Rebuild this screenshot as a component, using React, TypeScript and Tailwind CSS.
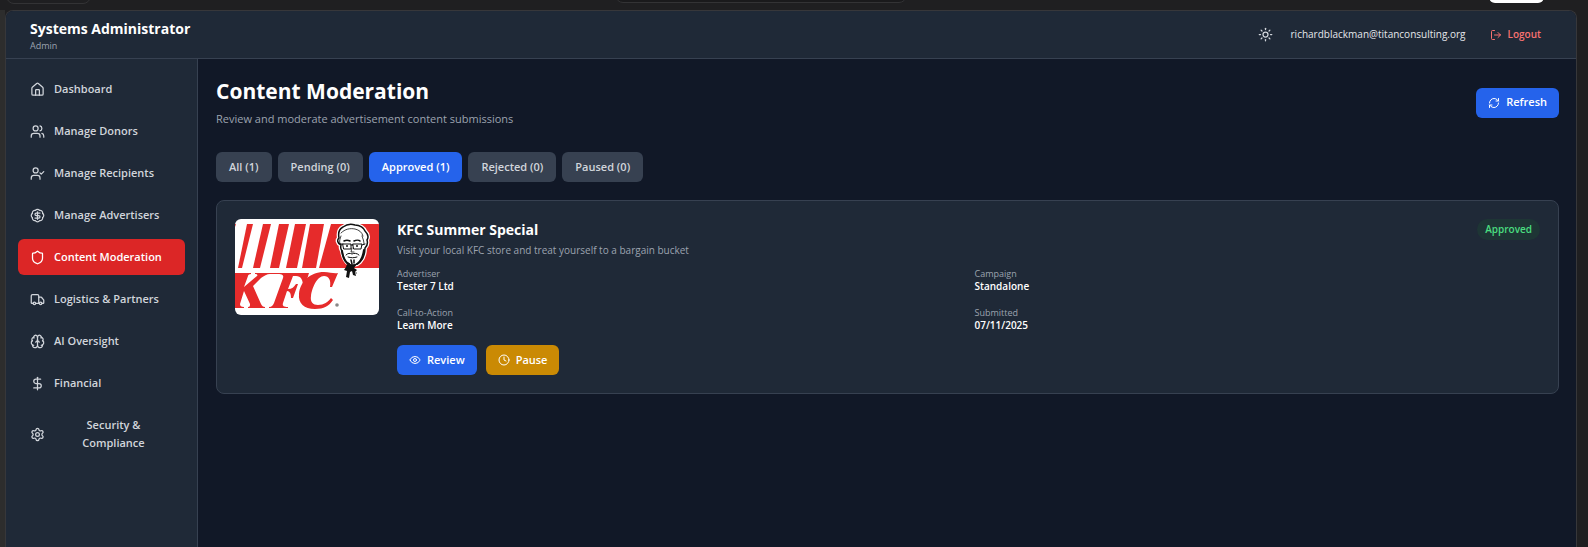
import { useState } from "react";
import {
  BadgeDollarSign,
  Brain,
  Clock,
  DollarSign,
  Eye,
  House,
  LogOut,
  RefreshCw,
  Settings,
  Shield,
  Sun,
  Truck,
  UserCheck,
  Users,
  type LucideIcon,
} from "lucide-react";

const NAV: { label: string; icon: LucideIcon }[] = [
  { label: "Dashboard", icon: House },
  { label: "Manage Donors", icon: Users },
  { label: "Manage Recipients", icon: UserCheck },
  { label: "Manage Advertisers", icon: BadgeDollarSign },
  { label: "Content Moderation", icon: Shield },
  { label: "Logistics & Partners", icon: Truck },
  { label: "AI Oversight", icon: Brain },
  { label: "Financial", icon: DollarSign },
  { label: "Security & Compliance", icon: Settings },
];

const FILTERS = [
  { label: "All", count: 1 },
  { label: "Pending", count: 0 },
  { label: "Approved", count: 1 },
  { label: "Rejected", count: 0 },
  { label: "Paused", count: 0 },
];

const DETAILS = [
  { label: "Advertiser", value: "Tester 7 Ltd" },
  { label: "Campaign", value: "Standalone" },
  { label: "Call-to-Action", value: "Learn More" },
  { label: "Submitted", value: "07/11/2025" },
];

const HEAD =
  "M108 8c4-3 9-3 12-2 5 0 9 3 10 6 3 3 4 6 2 9 1 3 0 6-2 8 0 6-2 11-5 14-3 3-8 4-11 2-4-2-6-7-7-13-1-2-2-3-1-6-4-2-4-5-2-7-1-5 0-9 4-11z";

function AdArtwork() {
  return (
    <svg viewBox="0 0 144 96" className="h-24 w-36 shrink-0 rounded-md bg-white" role="img" aria-label="KFC Summer Special">
      <g fill="#e62b2b">
        <path d="M0 5h1L0 8z" />
        <path d="M12 5h6L7 49H3z" />
        <path d="M28 5h8L25 49h-7z" />
        <path d="M44 5h10L44 49h-9z" />
        <path d="M60 5h11L62 49H51z" />
        <path d="M75 5h14L81 49H67z" />
        <path d="M96 5h48v44H84z" />
        {/* wordmark */}
        <path d="M0 54h16v1c-2 0-3 1-3 2L9 68l13-11c1-1 0-2-2-2v-1h15v1c-3 0-6 2-9 4l-8 8 8 18c1 2 2 3 4 3v1H13v-1c2 0 2-1 2-3L9 72 5 85c0 2 1 3 4 3v1H0z" />
        <path d="M35 54h39l-4 13h-2c0-6-2-10-7-10h-3l-5 13c4 0 6-2 8-5h2l-5 14h-2c0-4-1-7-4-7l-4 12c-1 3 1 4 5 4v1H34v-1c3 0 4-2 5-4l9-25c1-3-1-4-5-4h-8z" />
        <path d="M103 54l-6 14h-2c1-7-1-11-6-11-7 0-12 12-13 20-1 6 2 9 7 9 6 0 10-3 13-7l2 2c-4 6-9 9-18 9-11 0-17-6-16-15 1-12 11-22 25-22 6 0 10 2 14 1z" />
      </g>
      {/* white halo, then the head itself */}
      <path d={HEAD} fill="#fff" stroke="#fff" strokeWidth="4" />
      <path d={HEAD} fill="#fff" stroke="#111" strokeWidth="1.5" />
      <g fill="none" stroke="#111" strokeLinecap="round" strokeLinejoin="round">
        <path d="M106 14c4-4 9-5 14-4 4 1 7 3 8 7M106 17c-1 3-2 5-1 8M127 17c1 3 2 5 2 8" strokeWidth=".8" />
        <path d="M109 22c2-1 4-1 6 0M119 22c2-1 5-1 6 0" strokeWidth="1.6" />
        <path d="M108 25h8v5h-7zM118 25h9l-1 5h-7zM105 25h3M116 26h2M127 26l3-1" />
        <path d="M117 29l-1 4h3" strokeWidth=".8" />
        <path d="M111 36c2-2 4-2 6-1 2-1 5-1 7 1M113 38c3 1 6 1 9 0" />
        <path d="M107 32c1 7 4 12 7 13M129 31c-1 7-4 12-7 14" strokeWidth="2" />
        <path d="M116 41l1 4M119 41v3" strokeWidth="1.5" />
      </g>
      <circle cx="112" cy="27" r="1" fill="#111" />
      <circle cx="122" cy="27" r="1" fill="#111" />
      <path d="M112 45l5 1 5-1-3 4 3 2-2 2 1 4-3-1-1-4-2 1-1 6-3-1 1-6-3-1 2-3z" fill="#111" />
      <circle cx="102" cy="86" r="1.8" fill="#888" />
      <circle cx="121" cy="54" r="1" fill="#888" />
    </svg>
  );
}

function Header() {
  return (
    <header className="flex h-12 items-center justify-between border-b border-[#374151] bg-[#1f2937] pr-[23px] pl-6">
      <div className="pt-0.5">
        <p className="text-[14px] leading-5 font-bold text-white">Systems Administrator</p>
        <p className="text-[9px] leading-[14px] text-[#9ca3af]">Admin</p>
      </div>
      <div className="flex items-center">
        <button aria-label="Toggle theme" className="text-[#d1d5db]">
          <Sun size={15} />
        </button>
        <span className="ml-[18px] text-[10px] text-[#e5e7eb]">richardblackman@titanconsulting.org</span>
        <button className="ml-3 flex items-center gap-1.5 px-3 py-1.5 text-[10px] font-semibold text-[#f87171]">
          <LogOut size={12} />
          Logout
        </button>
      </div>
    </header>
  );
}

function Sidebar() {
  const [active, setActive] = useState("Content Moderation");

  return (
    <nav className="w-48 shrink-0 border-r border-[#374151] bg-[#1f2937] p-3">
      <ul className="flex flex-col gap-1.5">
        {NAV.map(({ label, icon: Icon }) => (
          <li key={label}>
            <button
              onClick={() => setActive(label)}
              className={`flex w-full items-center gap-[9px] rounded-md px-3 py-[9px] text-[11px] leading-[18px] font-semibold ${
                active === label ? "bg-[#dc2626] text-white" : "text-[#d1d5db]"
              }`}
            >
              <Icon size={15} className="shrink-0" />
              <span>{label}</span>
            </button>
          </li>
        ))}
      </ul>
    </nav>
  );
}

function AdCard() {
  return (
    <article className="mt-[18px] flex gap-[18px] rounded-lg border border-[#374151] bg-[#1f2937] p-[18px]">
      <AdArtwork />
      <div className="flex-1">
        <div className="flex items-start justify-between">
          <div>
            <h2 className="text-[14px] leading-[21px] font-bold text-white">KFC Summer Special</h2>
            <p className="mt-0.5 text-[10px] leading-4 text-[#9ca3af]">
              Visit your local KFC store and treat yourself to a bargain bucket
            </p>
          </div>
          <span className="rounded-full bg-[#1e3535] px-2 py-0.5 text-[10px] leading-[17px] font-semibold text-[#4ade80]">
            Approved
          </span>
        </div>
        <dl className="mt-[9px] grid grid-cols-2 gap-3">
          {DETAILS.map((d) => (
            <div key={d.label} className="pb-0.5">
              <dt className="text-[9px] leading-[14px] text-[#9ca3af]">{d.label}</dt>
              <dd className="text-[10px] leading-[11px] font-semibold text-white">{d.value}</dd>
            </div>
          ))}
        </dl>
        <div className="mt-3 flex gap-[9px]">
          <button className="flex h-[30px] items-center gap-1.5 rounded-md bg-[#2563eb] px-3 text-[11px] font-semibold text-white">
            <Eye size={12} />
            Review
          </button>
          <button className="flex h-[30px] items-center gap-1.5 rounded-md bg-[#ca8a04] px-3 text-[11px] font-semibold text-white">
            <Clock size={12} />
            Pause
          </button>
        </div>
      </div>
    </article>
  );
}

export default function App() {
  const [filter, setFilter] = useState("Approved");

  return (
    <div className="flex min-h-screen flex-col bg-[#1f1f21] font-['Open_Sans','Noto_Sans',sans-serif]">
      {/* browser chrome above the page */}
      <div className="flex h-2.5 items-start overflow-hidden pr-11 pl-1.5">
        <div className="-mt-4 h-5 w-[85px] rounded-lg border border-[#333335]" />
        <div className="flex-[9]" />
        <div className="-mt-4 h-[19px] w-[292px] rounded-lg border border-[#333335] bg-[#1a1a1c]" />
        <div className="flex-[10]" />
        <div className="-mt-4 h-[19px] w-[55px] rounded-md bg-white" />
      </div>
      <div className="flex flex-1">
        <div className="w-[5px] bg-[#2d2d2d]" />
        <div className="mr-[11px] flex flex-1 flex-col overflow-hidden rounded-t-lg border-x border-t border-[#37373a] bg-[#111827]">
          <Header />
          <div className="flex flex-1">
            <Sidebar />
            <main className="flex-1 py-[18px] pr-[17px] pl-[18px]">
              <div className="flex items-center justify-between">
                <div>
                  <h1 className="text-[21px] leading-7 font-bold text-white">Content Moderation</h1>
                  <p className="mt-[5px] text-[11px] leading-[18px] text-[#9ca3af]">
                    Review and moderate advertisement content submissions
                  </p>
                </div>
                <button className="flex h-[30px] items-center gap-1.5 rounded-md bg-[#2563eb] px-3 text-[11px] font-semibold text-white">
                  <RefreshCw size={12} />
                  Refresh
                </button>
              </div>
              <div className="mt-6 flex gap-1.5">
                {FILTERS.map((f) => (
                  <button
                    key={f.label}
                    onClick={() => setFilter(f.label)}
                    className={`h-[30px] rounded-md px-[13px] text-[11px] font-semibold ${
                      filter === f.label ? "bg-[#2563eb] text-white" : "bg-[#374151] text-[#d1d5db]"
                    }`}
                  >
                    {f.label} ({f.count})
                  </button>
                ))}
              </div>
              <AdCard />
            </main>
          </div>
        </div>
      </div>
    </div>
  );
}
